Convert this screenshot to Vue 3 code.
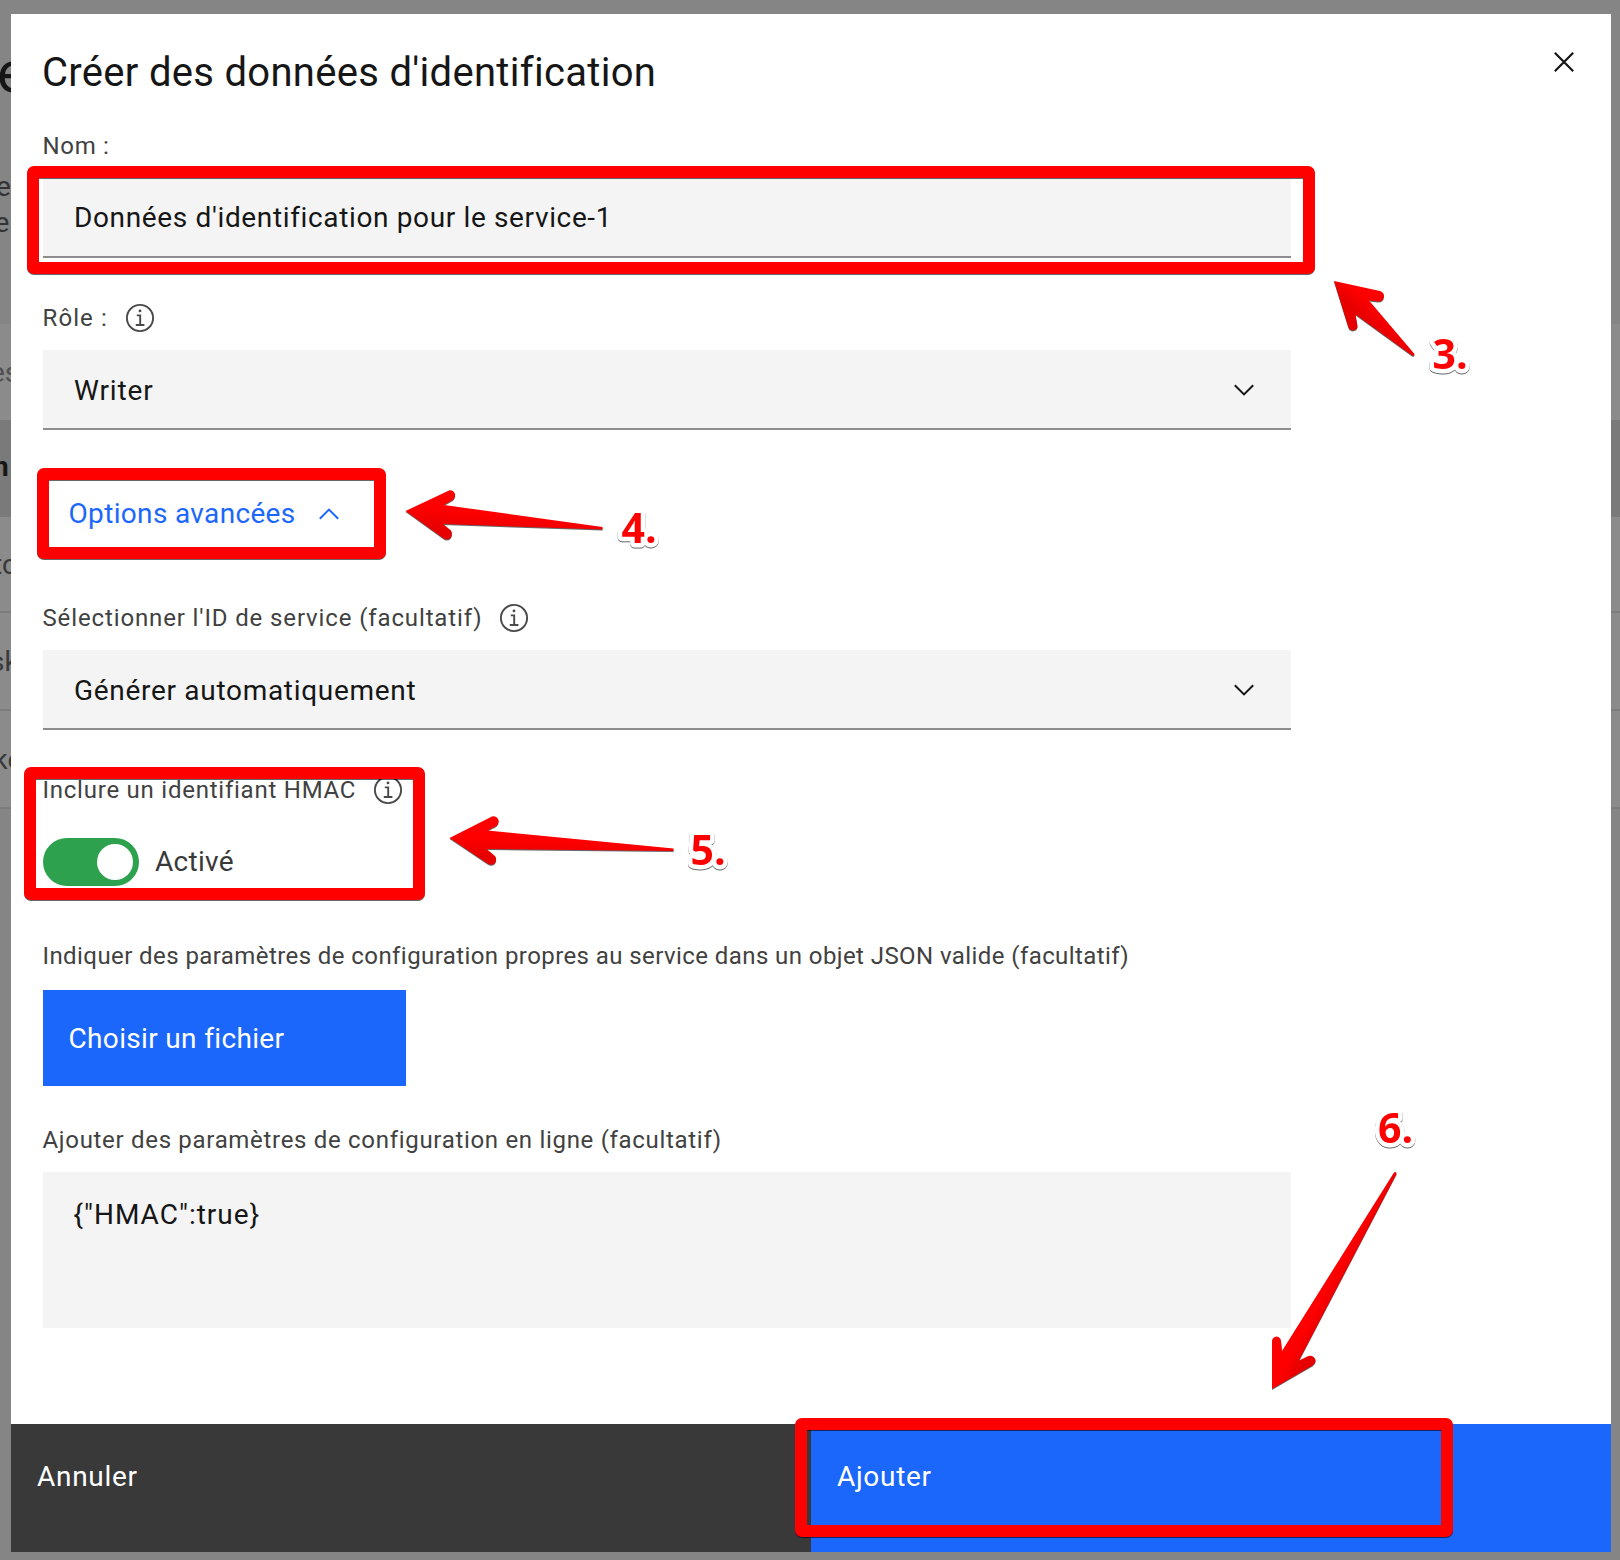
<script setup>
import { ref } from 'vue'

const name = ref("Données d'identification pour le service-1")
const inline = ref('{"HMAC":true}')

const rows = [
  { text: 'es', kind: 'toolbar', shift: -10 },
  { text: 'n', kind: 'head', shift: -7 },
  { text: 'to', kind: 'item', shift: -7 },
  { text: 'sk', kind: 'item', shift: -10 },
  { text: 'ke', kind: 'item', shift: -6.5 },
]

const frames = [
  { x: 27, y: 166, w: 1288, h: 108 },
  { x: 37, y: 468, w: 349, h: 91 },
  { x: 24, y: 767, w: 401, h: 133 },
  { x: 795, y: 1418, w: 658, h: 119 },
]

const arrows = [
  {
    d: 'M1334 281L1380 291Q1384 292 1384 296.500Q1383 302 1378 301.500L1369 300.500L1414.500 354Q1414.500 356.500 1412 355.500L1355.500 314.500L1357.500 326Q1357.500 330 1352.500 330.500Q1349 330 1348 326Z',
    from: [1382, 305], to: [1368, 321],
  },
  {
    d: 'M405.500 511L449 490.500Q453 489.500 455 494Q455.500 498.500 452 500.500L444 505L602.500 527V529.500L443 524L451 530.500Q453 534.500 450.500 538Q447 541 443 538Z',
    from: [480, 504], to: [478, 531],
  },
  {
    d: 'M449.500 838L492 816.500Q496.500 815.500 498.500 820Q499 824.500 495.500 826.500L487.500 830.500L673.500 848.500V851L486.500 849L495 856Q497.500 860 494.500 863.500Q491.500 866 487.500 863.500Z',
    from: [520, 830], to: [519, 858],
  },
  {
    d: 'M1272 1389V1341Q1272.500 1337 1276.500 1336.500Q1280.500 1337 1281 1341L1282 1351L1394 1172.500Q1396.500 1171 1396.500 1174L1299 1360.500L1308.500 1356Q1313.500 1355 1315.500 1360Q1316 1363.500 1312.500 1365.500Z',
    from: [1300, 1325], to: [1317, 1334],
  },
]

const steps = [
  { label: '3.', x: 1432.5, y: 368.5 },
  { label: '4.', x: 621.5, y: 543 },
  { label: '5.', x: 690.5, y: 865 },
  { label: '6.', x: 1378, y: 1142.5 },
]
</script>

<template>
  <div class="page">
    <div class="backdrop">
      <div class="hero">
        <div class="hero-title">e</div>
        <div class="hero-text first">e</div>
        <div class="hero-text second">e</div>
      </div>
      <div v-for="r in rows" :key="r.text" class="row" :class="r.kind">
        <span :style="{ marginLeft: r.shift + 'px' }">{{ r.text }}</span>
      </div>
    </div>

    <section class="modal">
      <div class="content">
        <header class="header">
          <h1>Créer des données d'identification</h1>
          <svg class="close" width="32" height="32" viewBox="0 0 32 32">
            <path d="M6.800 6.800L25.200 25.200M25.200 6.800L6.800 25.200" />
          </svg>
        </header>

        <div class="label l-name">Nom :</div>
        <div class="field input">{{ name }}</div>

        <div class="label l-role gap">
          <span>Rôle :</span>
          <svg class="info" viewBox="0 0 32 32"><circle cx="16" cy="16" r="13.100" /><path d="M12.800 13.400H16.200V23M11.800 23H20.400" /><circle class="dot" cx="16" cy="8.900" r="1.400" /></svg>
        </div>
        <div class="field select">
          <span class="writer">Writer</span>
          <svg class="chevron" viewBox="0 0 24 24"><path d="M2.800 7.200L12 16.400L21.200 7.200" /></svg>
        </div>

        <div class="advanced">
          <span>Options avancées</span>
          <svg class="chevron" viewBox="0 0 24 24"><path d="M2.800 16.800L12 7.600L21.200 16.800" /></svg>
        </div>

        <div class="label l-id">
          <span>Sélectionner l'ID de service (facultatif)</span>
          <svg class="info" viewBox="0 0 32 32"><circle cx="16" cy="16" r="13.100" /><path d="M12.800 13.400H16.200V23M11.800 23H20.400" /><circle class="dot" cx="16" cy="8.900" r="1.400" /></svg>
        </div>
        <div class="field select">
          <span class="auto">Générer automatiquement</span>
          <svg class="chevron" viewBox="0 0 24 24"><path d="M2.800 7.200L12 16.400L21.200 7.200" /></svg>
        </div>

        <div class="label l-hmac gap">
          <span>Inclure un identifiant HMAC</span>
          <svg class="info" viewBox="0 0 32 32"><circle cx="16" cy="16" r="13.100" /><path d="M12.800 13.400H16.200V23M11.800 23H20.400" /><circle class="dot" cx="16" cy="8.900" r="1.400" /></svg>
        </div>
        <div class="toggle">
          <span class="track"><span class="knob"></span></span>
          <span>Activé</span>
        </div>

        <div class="label l-file">Indiquer des paramètres de configuration propres au service dans un objet JSON valide (facultatif)</div>
        <div class="file-button">Choisir un fichier</div>

        <div class="label l-inline">Ajouter des paramètres de configuration en ligne (facultatif)</div>
        <div class="textarea">{{ inline }}</div>
      </div>

      <footer class="footer">
        <div class="btn cancel">Annuler</div>
        <div class="btn add">Ajouter</div>
      </footer>
    </section>

    <svg class="annotations" width="1620" height="1560" viewBox="0 0 1620 1560">
      <defs>
        <linearGradient
          v-for="(a, i) in arrows" :id="'shade' + i" :key="i" gradientUnits="userSpaceOnUse"
          :x1="a.from[0]" :y1="a.from[1]" :x2="a.to[0]" :y2="a.to[1]"
        >
          <stop offset="0.300" stop-color="#ff0000" />
          <stop offset="1" stop-color="#e60000" />
        </linearGradient>
      </defs>
      <g class="shadowed">
        <rect
          v-for="f in frames" :key="f.y" class="frame" rx="1"
          :x="f.x + 6" :y="f.y + 6" :width="f.w - 12" :height="f.h - 12"
        />
        <path v-for="(a, i) in arrows" :key="i" :d="a.d" :fill="`url(#shade${i})`" />
      </g>
      <text v-for="s in steps" :key="s.label" class="step" :x="s.x" :y="s.y">{{ s.label }}</text>
    </svg>
  </div>
</template>

<style>
body {
  margin: 0;
}
</style>

<style scoped>
.page {
  position: relative;
  width: 1620px;
  height: 1560px;
  overflow: hidden;
  background: #858585;
  font-family: Roboto, "Liberation Sans", sans-serif;
  font-size: 28px;
  color: #161616;
}
.hero {
  height: 324px;
  box-sizing: border-box;
  padding-top: 41px;
}
.hero-title {
  font-size: 57px;
  line-height: 64px;
  margin-left: -3px;
}
.hero-text {
  line-height: 36px;
  color: #333;
}
.hero-text.first {
  margin: 64px 0 0 -4px;
}
.hero-text.second {
  margin-left: -5.5px;
}
.row {
  height: 98px;
  box-sizing: border-box;
  display: flex;
  align-items: center;
  white-space: nowrap;
  color: #393939;
  background: #8b8b8b;
}
.row.toolbar {
  height: 96px;
  color: #505050;
}
.row.head {
  height: 97px;
  padding-bottom: 4px;
  background: #7a7a7a;
  color: #161616;
  font-weight: 700;
}
.row.item {
  border-bottom: 2px solid #7c7c7c;
}
.row.head + .row.item {
  height: 96px;
}
.modal {
  position: absolute;
  left: 11px;
  top: 14px;
  width: 1600px;
  height: 1538px;
  display: flex;
  flex-direction: column;
  background: #fff;
}
.content {
  flex: 1;
  padding: 34px 32px 0;
}
.header {
  display: flex;
  justify-content: space-between;
  height: 82px;
}
h1 {
  margin: 0 0 0 -1px;
  font-size: 40px;
  line-height: 50px;
  font-weight: 400;
  letter-spacing: 0.3px;
}
.close {
  margin: -2px -1px 0 0;
  fill: none;
  stroke: #161616;
  stroke-width: 2.2;
}
.label {
  display: flex;
  align-items: center;
  height: 32px;
  margin-bottom: 16px;
  margin-left: -0.5px;
  font-size: 24px;
  line-height: 32px;
  white-space: nowrap;
  color: #414141;
}
.gap {
  margin-top: 44px;
}
.l-name {
  letter-spacing: 0.7px;
}
.l-role {
  letter-spacing: 1.1px;
}
.l-id {
  letter-spacing: 0.87px;
  margin-top: 70px;
}
.l-hmac {
  letter-spacing: 0.76px;
}
.l-file {
  letter-spacing: 0.42px;
  margin-top: 54px;
  margin-bottom: 18px;
}
.l-inline {
  letter-spacing: 0.69px;
  margin-top: 38px;
}
.info {
  width: 32px;
  height: 32px;
  margin-left: 16px;
  fill: none;
  stroke: #4a4a4a;
  stroke-width: 1.9;
}
.info .dot {
  fill: #4a4a4a;
  stroke: none;
}
.field {
  box-sizing: border-box;
  width: 1248px;
  height: 80px;
  padding-left: 31px;
  background: #f4f4f4;
  border-bottom: 2px solid #8d8d8d;
}
.input {
  line-height: 80px;
  letter-spacing: 0.64px;
}
.select {
  display: flex;
  justify-content: space-between;
  align-items: flex-start;
  padding-right: 35px;
  line-height: 82px;
}
.select .chevron {
  margin-top: 28px;
}
.writer {
  letter-spacing: 0.9px;
}
.auto {
  letter-spacing: 0.7px;
}
.chevron {
  width: 24px;
  height: 24px;
  fill: none;
  stroke: currentColor;
  stroke-width: 2;
}
.advanced {
  display: flex;
  align-items: center;
  height: 36px;
  margin-top: 66px;
  padding-left: 25.5px;
  line-height: 38px;
  letter-spacing: 0.34px;
  color: #1c67fb;
}
.advanced .chevron {
  margin-left: 21px;
}
.toggle {
  display: flex;
  align-items: center;
  gap: 16px;
  height: 48px;
  margin-top: 32px;
  line-height: 50px;
  letter-spacing: 0.3px;
  color: #393939;
}
.track {
  box-sizing: border-box;
  display: flex;
  justify-content: flex-end;
  width: 96px;
  height: 48px;
  padding: 6px;
  border-radius: 24px;
  background: #2da14e;
}
.knob {
  width: 36px;
  height: 36px;
  border-radius: 50%;
  background: #fff;
}
.file-button {
  box-sizing: border-box;
  width: 363px;
  height: 96px;
  padding-left: 25.5px;
  line-height: 98px;
  letter-spacing: 0.34px;
  color: #fff;
  background: #1c67fb;
}
.textarea {
  box-sizing: border-box;
  width: 1248px;
  height: 156px;
  padding: 23px 30.5px;
  line-height: 40px;
  letter-spacing: 1px;
  background: #f4f4f4;
}
.footer {
  display: flex;
  height: 128px;
}
.btn {
  box-sizing: border-box;
  flex: 1;
  padding: 33px 26px;
  line-height: 40px;
  letter-spacing: 0.7px;
  color: #fff;
}
.cancel {
  background: #393939;
}
.add {
  background: #1c67fb;
}
.annotations {
  position: absolute;
  left: 0;
  top: 0;
}
.shadowed {
  filter: drop-shadow(0 1px 0.4px rgba(0, 0, 0, 0.6));
}
.frame {
  fill: none;
  stroke: #f00;
  stroke-width: 12;
  stroke-linejoin: round;
}
.step {
  font: 700 41px "Open Sans", "Noto Sans", sans-serif;
  fill: #f00;
  stroke: #fff;
  stroke-width: 9;
  stroke-linejoin: round;
  paint-order: stroke;
  filter: drop-shadow(0 1.5px 0.6px rgba(0, 0, 0, 0.6));
}
</style>
